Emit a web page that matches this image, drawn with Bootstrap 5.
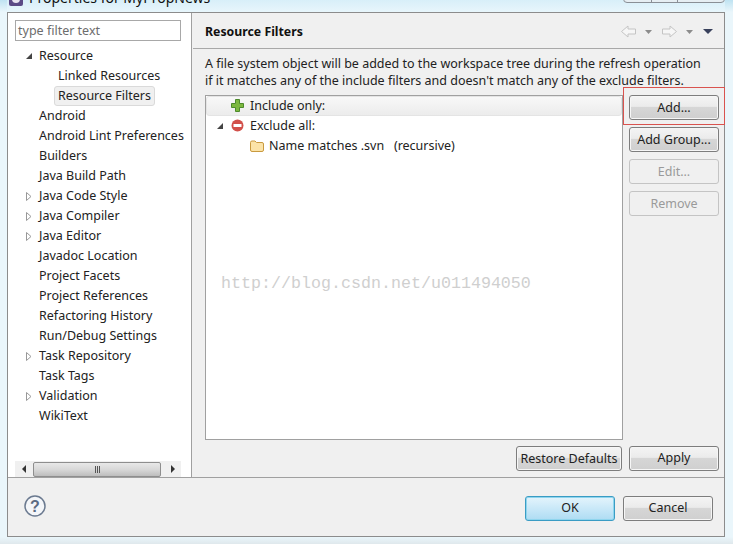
<!DOCTYPE html>
<html lang="en"><head><meta charset="utf-8"><title>Properties</title>
<link href="https://cdn.jsdelivr.net/npm/bootstrap@5.3.0/dist/css/bootstrap.min.css" rel="stylesheet">
<style>
html,body{margin:0;width:733px;height:544px;overflow:hidden}
body{font-family:"Noto Sans","Open Sans",sans-serif;font-size:12.5px;color:#222;background:linear-gradient(#bfe3f2,#eaf6fb 12px,#eaf6fb 537px,#dfe8ec);line-height:20px}
.winframe{width:733px;height:544px;padding:0 8px 7px 7px}
.titlebar{height:12px;overflow:hidden;position:relative;background:linear-gradient(#d8eff9,#e8f6fc)}
.titlebar .ttl{margin-top:-12px;margin-left:22px;font-size:14px;white-space:nowrap;color:#111}
.appicon{position:absolute;left:1px;top:-9px}
.closegrp{position:absolute;right:0;top:-12px;width:102px;height:15px;border:1px solid #8a8f96;border-radius:4px;background:#e6eef3;display:flex;padding-left:27px}
.closegrp i{display:block;width:27px;height:14px;border-left:1px solid #8a8f96;border-right:1px solid #8a8f96}
.dlg{height:525px;width:718px;border:1px solid #8c8c8c;background:#f0f0f0;display:flex;flex-direction:column}
.toparea{height:464px;display:flex;flex:none}
.sidepane{width:184px;flex:none;background:#fff;border-right:1px solid #a0a0a0;padding:7px 10px 0 7px;display:flex;flex-direction:column;position:relative}
.filterbox{height:21px;width:166px;border:1px solid #a8a8a8;color:#6d6d6d;padding-left:2px;line-height:19px;flex:none}
.treelist{margin:5px 0 0 0;padding:0;list-style:none;flex:1}
.treerow{height:20px;display:flex;align-items:center;white-space:nowrap;padding-left:24px;position:relative}
.treerow.sub{padding-left:43px}
.treerow.sel span{background:#f0f0f0;border:1px solid #dadada;border-radius:3px;margin-left:-4px;padding:0 3px;line-height:18px;height:20px}
.twist{position:absolute;left:10px;top:6px}
.hscroll{height:16px;width:166px;background:#f0f0f0;display:flex;align-items:center;flex:none}
.sarrow{width:18px;display:flex;justify-content:center;flex:none}
.sthumb{width:128px;height:15px;border:1px solid #8e8e8e;border-radius:2px;background:linear-gradient(#e8e8e8,#d8d8d8 50%,#bdbdbd);display:flex;align-items:center;justify-content:center;flex:none;gap:1px}
.sthumb i{display:block;width:1px;height:7px;background:#555}
.mainpane{flex:1;display:flex;flex-direction:column;min-width:0;position:relative}
.headbar{height:36px;border-bottom:1px solid #a8a8a8;display:flex;align-items:center;padding-left:12px;padding-top:2px;flex:none;margin-left:1px;position:relative}
.headbar b{font-weight:700;font-size:12.3px;color:#111}
.navicons{position:absolute;right:11px;top:12px;display:flex;align-items:center}
.descr{padding:6px 0 0 13px;height:42px;line-height:17px;flex:none;white-space:nowrap}
.workrow{display:flex;height:345px;padding-left:13px;margin-top:4px;flex:none;position:relative}
.filterlist{width:418px;height:345px;border:1px solid #a0a0a0;background:#fff;flex:none;position:relative}
.frow{height:20px;display:flex;align-items:center;white-space:pre;position:relative;padding-bottom:1px}
.frow.hot{background:linear-gradient(#f8f8f8,#ececec);border:1px solid #e4e4e4;border-radius:3px}
.btncol{display:flex;flex-direction:column;gap:7px;margin-left:6px;width:90px;flex:none}
.eb.btn{--bs-btn-padding-x:0;--bs-btn-padding-y:0;--bs-btn-font-size:12.5px;--bs-btn-line-height:1;--bs-btn-border-radius:3px;width:90px;height:25px;border:1px solid #7d7d7d;background:linear-gradient(#f4f4f4,#ebebeb 45%,#d6d6d6 50%,#cfcfcf);color:#222;box-shadow:inset 0 0 0 1px #f6f6f6}
.btncol .eb.btn,.pagebtns .eb.btn.wide{padding-top:2px}
.eb.btn.off{background:#f0f0f0;border-color:#c4c4c4;color:#9a9a9a;opacity:1;box-shadow:none}
.eb.btn.pri{background:linear-gradient(#e4f4fc,#c9e8f8 50%,#aedcf3);border-color:#3a9cc4;box-shadow:inset 0 0 0 1px #8fd5ee}
.redmark{position:absolute;left:431px;top:-8px;width:102px;height:38px;border:1px solid #d9534f;pointer-events:none}
.pagebtns{display:flex;justify-content:flex-end;gap:7px;padding:6px 5px 0 0;flex:none}
.pagebtns .wide{width:106px}
.bottombar{height:60px;border-top:1px solid #a0a0a0;flex:none;display:flex;align-items:center;padding:0 11px 0 15px}
.helpic{margin-top:-3px}
.bottombar .btnwrap{margin-left:auto;display:flex;gap:8px;margin-top:1px}
.wmark{position:absolute;left:15px;top:178px;font-family:"Liberation Mono",monospace;font-size:16.67px;color:#cfcfcf;white-space:nowrap;line-height:20px}
.gapw{margin-left:9px}.gapn{margin-left:10px}
</style></head>
<body>
<div class="winframe">
  <div class="titlebar">
    <svg class="appicon" width="16" height="16" viewBox="0 0 16 16"><rect x="1" y="1" width="14" height="14" rx="2" fill="#5b4a86"/><circle cx="8" cy="8" r="4" fill="#e8e4f0"/></svg>
    <div class="ttl">Properties for MyPropNews</div>
    <div class="closegrp"><i></i></div>
  </div>
  <div class="dlg">
    <div class="toparea">
      <div class="sidepane">
        <div class="filterbox">type filter text</div>
        <ul class="treelist">
          <li class="treerow"><svg class="twist" width="8" height="8" viewBox="0 0 8 8"><path d="M7 1V7H1Z" fill="#444"/></svg><span>Resource</span></li>
          <li class="treerow sub"><span>Linked Resources</span></li>
          <li class="treerow sub sel"><span>Resource Filters</span></li>
          <li class="treerow"><span>Android</span></li>
          <li class="treerow"><span>Android Lint Preferences</span></li>
          <li class="treerow"><span>Builders</span></li>
          <li class="treerow"><span>Java Build Path</span></li>
          <li class="treerow"><svg class="twist" width="8" height="9" viewBox="0 0 8 9"><path d="M1.5 .5 6 4.5 1.5 8.5Z" fill="#fff" stroke="#999"/></svg><span>Java Code Style</span></li>
          <li class="treerow"><svg class="twist" width="8" height="9" viewBox="0 0 8 9"><path d="M1.5 .5 6 4.5 1.5 8.5Z" fill="#fff" stroke="#999"/></svg><span>Java Compiler</span></li>
          <li class="treerow"><svg class="twist" width="8" height="9" viewBox="0 0 8 9"><path d="M1.5 .5 6 4.5 1.5 8.5Z" fill="#fff" stroke="#999"/></svg><span>Java Editor</span></li>
          <li class="treerow"><span>Javadoc Location</span></li>
          <li class="treerow"><span>Project Facets</span></li>
          <li class="treerow"><span>Project References</span></li>
          <li class="treerow"><span>Refactoring History</span></li>
          <li class="treerow"><span>Run/Debug Settings</span></li>
          <li class="treerow"><svg class="twist" width="8" height="9" viewBox="0 0 8 9"><path d="M1.5 .5 6 4.5 1.5 8.5Z" fill="#fff" stroke="#999"/></svg><span>Task Repository</span></li>
          <li class="treerow"><span>Task Tags</span></li>
          <li class="treerow"><svg class="twist" width="8" height="9" viewBox="0 0 8 9"><path d="M1.5 .5 6 4.5 1.5 8.5Z" fill="#fff" stroke="#999"/></svg><span>Validation</span></li>
          <li class="treerow"><span>WikiText</span></li>
        </ul>
        <div class="hscroll">
          <div class="sarrow"><svg width="5" height="8" viewBox="0 0 5 8"><path d="M4 0V8L0 4Z" fill="#333"/></svg></div>
          <div class="sthumb"><i></i><i></i><i></i></div>
          <div class="sarrow ms-auto"><svg width="5" height="8" viewBox="0 0 5 8"><path d="M1 0V8L5 4Z" fill="#333"/></svg></div>
        </div>
      </div>
      <div class="mainpane">
        <div class="headbar"><b>Resource Filters</b>
          <div class="navicons">
            <svg width="15" height="13" viewBox="0 0 15 13"><path d="M.5 6.500 7 1V4H14.500V9H7V12Z" fill="#f6f6f6" stroke="#c4c4c4"/></svg>
            <svg class="gapw" width="7" height="4" viewBox="0 0 7 4"><path d="M0 0H7L3.500 4Z" fill="#8c8c8c"/></svg>
            <svg class="gapn" width="15" height="13" viewBox="0 0 15 13"><path d="M14.500 6.500 8 1V4H.5V9H8V12Z" fill="#f6f6f6" stroke="#c4c4c4"/></svg>
            <svg class="gapw" width="7" height="4" viewBox="0 0 7 4"><path d="M0 0H7L3.500 4Z" fill="#8c8c8c"/></svg>
            <svg class="gapn" width="10" height="5" viewBox="0 0 10 5"><path d="M0 0H10L5 5Z" fill="#39415c"/></svg>
          </div>
        </div>
        <div class="descr">A file system object will be added to the workspace tree during the refresh operation<br>if it matches any of the include filters and doesn't match any of the exclude filters.</div>
        <div class="workrow">
          <div class="filterlist">
            <div class="frow hot"><svg class="ms-4" style="margin-right:6px" width="13" height="13" viewBox="0 0 13 13"><path d="M4.5 0.5H8.500V4.500H12.500V8.500H8.500V12.500H4.500V8.500H.5V4.500H4.500Z" fill="#7cb83e" stroke="#4d8a2b"/></svg>Include only:</div>
            <div class="frow"><svg class="twist" style="top:6px" width="8" height="8" viewBox="0 0 8 8"><path d="M7 1V7H1Z" fill="#444"/></svg><svg style="margin-left:25px;margin-right:6px" width="13" height="13" viewBox="0 0 13 13"><circle cx="6.500" cy="6.500" r="6" fill="#d2504a"/><rect x="2.500" y="5" width="8" height="3" fill="#fff"/></svg>Exclude all:</div>
            <div class="frow"><svg style="margin-left:44px;margin-right:5px" width="14" height="12" viewBox="0 0 14 12"><path d="M.5 2.500Q.5 1 2 1H5L6.500 2.500H12Q13.500 2.500 13.500 4V10Q13.500 11.500 12 11.500H2Q.5 11.500 .5 10Z" fill="#fbe3a8" stroke="#c99a3f"/></svg>Name matches .svn   (recursive)</div>
            <div class="wmark">http://blog.csdn.net/u011494050</div>
          </div>
          <div class="btncol">
            <button class="btn eb" type="button">Add...</button>
            <button class="btn eb" type="button">Add Group...</button>
            <button class="btn eb off" type="button" disabled>Edit...</button>
            <button class="btn eb off" type="button" disabled>Remove</button>
          </div>
          <div class="redmark"></div>
        </div>
        <div class="pagebtns">
          <button class="btn eb wide" type="button">Restore Defaults</button>
          <button class="btn eb" type="button">Apply</button>
        </div>
      </div>
    </div>
    <div class="bottombar">
      <svg class="helpic" width="24" height="24" viewBox="0 0 24 24"><circle cx="12" cy="12" r="10" fill="#f4f6f9" stroke="#6b7a90" stroke-width="1.500"/><text x="12" y="18" text-anchor="middle" font-family="Liberation Sans" font-weight="700" font-size="16" fill="#5c6b82">?</text></svg>
      <div class="btnwrap">
        <button class="btn eb pri" type="button">OK</button>
        <button class="btn eb" type="button">Cancel</button>
      </div>
    </div>
  </div>
</div>
</body></html>
